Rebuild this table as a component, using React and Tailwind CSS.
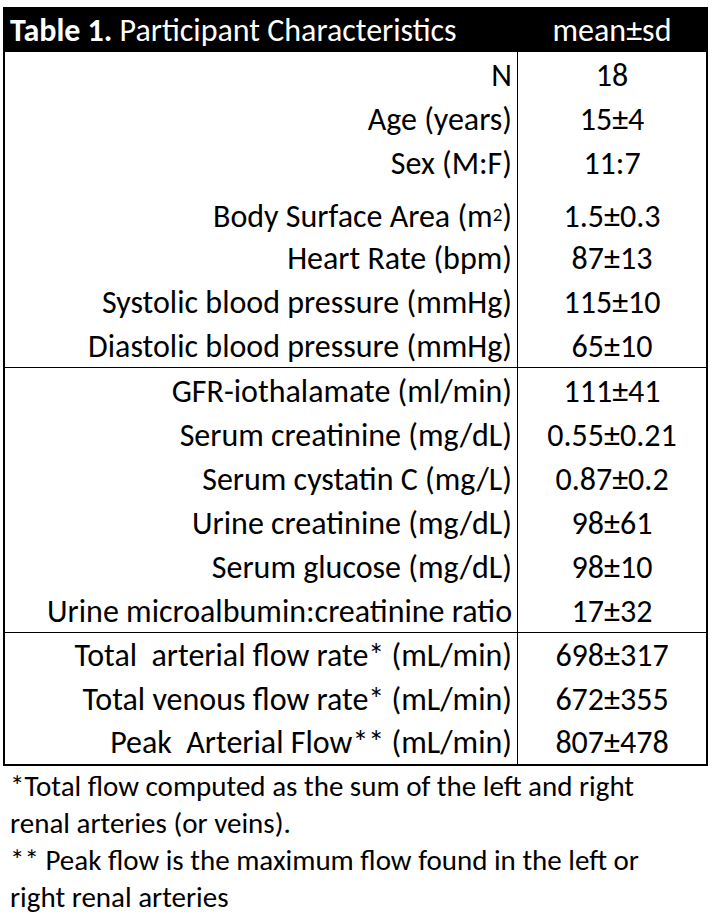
const rowsA = [
  { label: "N", value: "18" },
  { label: "Age (years)", value: "15±4" },
  { label: "Sex (M:F)", value: "11:7" },
  { label: "Body Surface Area (m", sup: "2", tail: ")", value: "1.5±0.3", tall: true },
  { label: "Heart Rate (bpm)", value: "87±13" },
  { label: "Systolic blood pressure (mmHg)", value: "115±10" },
  { label: "Diastolic blood pressure (mmHg)", value: "65±10" },
];

const rowsB = [
  { label: "GFR-iothalamate (ml/min)", value: "111±41" },
  { label: "Serum creatinine (mg/dL)", value: "0.55±0.21" },
  { label: "Serum cystatin C (mg/L)", value: "0.87±0.2" },
  { label: "Urine creatinine (mg/dL)", value: "98±61" },
  { label: "Serum glucose (mg/dL)", value: "98±10" },
  { label: "Urine microalbumin:creatinine ratio", value: "17±32" },
];

const rowsC = [
  { label: "Total\u00a0 arterial flow rate* (mL/min)", value: "698±317" },
  { label: "Total venous flow rate* (mL/min)", value: "672±355" },
  { label: "Peak\u00a0 Arterial Flow** (mL/min)", value: "807±478" },
];

const Row = ({ row, short }) => (
  <div className={`flex ${row.tall ? "h-[51px]" : short ? "h-[43.5px]" : "h-[44px]"}`}>
    <div className="flex-1 pr-[5px] flex items-center justify-end border-r border-black">
      <span className={row.tall ? "pt-[14px]" : "pt-[3px]"}>
        {row.label}
        {row.sup && <sup className="text-[19px] relative -top-[6px]">{row.sup}</sup>}
        {row.tail}
      </span>
    </div>
    <div className="w-[188px] flex items-center justify-center">
      <span className={row.tall ? "pt-[14px]" : "pt-[3px]"}>{row.value}</span>
    </div>
  </div>
);

const Section = ({ rows, last, short }) => (
  <div className={last ? "" : "border-b border-black"}>
    {rows.map((r) => (
      <Row key={r.label} row={r} short={short} />
    ))}
  </div>
);

export default function App() {
  return (
    <div
      className="bg-white w-[718px] h-[917px] text-black text-[32px] leading-none pt-[7px] pl-[3px]"
      style={{ fontFamily: "Calibri, Carlito, sans-serif" }}
    >
      <div className="w-[705px] border-2 border-black">
        <div className="flex h-[43px] items-center bg-black text-white">
          <div className="flex-1 pl-[5px]">
            <span className="font-bold">Table 1.</span> Participant Characteristics
          </div>
          <div className="w-[188px] text-center">mean±sd</div>
        </div>
        <Section rows={rowsA} />
        <Section rows={rowsB} />
        <Section rows={rowsC} last short />
      </div>
      <div className="pl-[7px] pt-[2px] text-[29px] leading-[37px]">
        <div>*Total flow computed as the sum of the left and right</div>
        <div>renal arteries (or veins).</div>
        <div>** Peak flow is the maximum flow found in the left or</div>
        <div>right renal arteries</div>
      </div>
    </div>
  );
}
